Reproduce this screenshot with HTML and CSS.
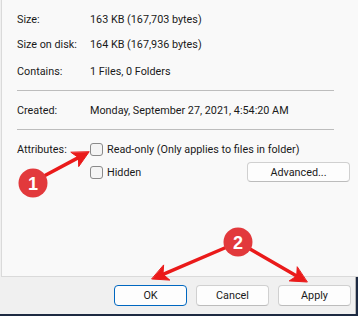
FILE: index.html
```html
<!DOCTYPE html>
<html>
  <head>
    <title>Properties</title>
    <link rel="stylesheet" href="styles.css">
  </head>
  <body>
    <div class="window">
      <div class="panel">
        <div class="row first"><span class="label">Size:</span><span>163 KB (167,703 bytes)</span></div>
        <div class="row disk"><span class="label">Size on disk:</span><span>164 KB (167,936 bytes)</span></div>
        <div class="row"><span class="label">Contains:</span><span>1 Files, 0 Folders</span></div>
        <div class="sep"></div>
        <div class="row"><span class="label">Created:</span><span>Monday, September 27, 2021, 4:54:20 AM</span></div>
        <div class="sep"></div>
        <div class="row"><span class="label">Attributes:</span><span class="check"></span><span>Read-only (Only applies to files in folder)</span></div>
        <div class="row hidden-row">
          <span class="label"></span><span class="check"></span><span>Hidden</span>
          <button class="btn advanced">Advanced...</button>
        </div>
      </div>
      <div class="footer">
        <button class="btn default">OK</button>
        <button class="btn">Cancel</button>
        <button class="btn">Apply</button>
      </div>
    </div>
    <div class="taskbar"></div>

    <svg class="marks" width="358" height="316" viewBox="0 0 358 316">
      <g fill="#ea1a1a" stroke="#ea1a1a" stroke-width="3.5" stroke-linecap="round" stroke-linejoin="round">
        <line x1="44" y1="176" x2="78.4" y2="157.6" />
        <polygon points="89,152 78.7,166.6 78.4,157.6 71.1,152.4" stroke-width="1" />
        <line x1="227" y1="247" x2="163" y2="274.3" />
        <polygon points="152,279 169.8,280.1 163,274.3 163.6,265.3" stroke-width="1" />
        <line x1="250" y1="249" x2="296.7" y2="276" />
        <polygon points="307,282 289.2,280.9 296.7,276 297.2,267.1" stroke-width="1" />
      </g>
      <circle cx="33" cy="183" r="14.5" fill="#e2393c" />
      <circle cx="238" cy="242" r="14.5" fill="#e2393c" />
      <text x="33" y="189.5" class="num">1</text>
      <text x="238" y="248.5" class="num">2</text>
    </svg>
  </body>
</html>
```

FILE: styles.css
```css
body {
  margin: 0;
  width: 358px;
  height: 316px;
  background-color: #1d2a42;
  font-family: Roboto, "Liberation Sans", sans-serif;
  font-size: 10.8px;
  color: #1a1a1a;
  position: relative;
  overflow: hidden;
}

.window {
  height: 314px;
  width: 355px;
  background-color: #f0f0f0;
  border-right: 1px solid #b4b4b4;
  display: flex;
  flex-direction: column;
}

.panel {
  margin-left: 1px;
  width: 345px;
  height: 276px;
  background-color: #f9f9f9;
  border: 1px solid #dadada;
  border-top: none;
  display: flex;
  flex-direction: column;
  padding-left: 15px;
  box-sizing: content-box;
}

.row {
  display: flex;
  align-items: center;
  height: 16px;
  margin-top: 11px;
  white-space: nowrap;
}

.row.disk {
  margin-top: 9px;
}

.label {
  width: 73px;
  flex: none;
}

.sep {
  height: 1px;
  width: 317px;
  margin-top: 11px;
  background-color: #bdbdbd;
}

.check {
  width: 11px;
  height: 11px;
  border: 1px solid #8a8a8a;
  border-radius: 3px;
  background-color: #f4f4f4;
  margin-right: 4px;
  flex: none;
}

.hidden-row {
  margin-top: 7px;
}

.btn {
  font-family: Roboto, "Liberation Sans", sans-serif;
  font-size: 10.8px;
  color: #1a1a1a;
  background-color: #fdfdfd;
  border: 1px solid #d0d0d0;
  border-bottom-color: #bcbcbc;
  border-radius: 4px;
  height: 21px;
  width: 73px;
  padding: 0;
}

.advanced {
  margin-left: auto;
  margin-right: 12px;
  width: 103px;
  height: 20px;
}

.footer {
  display: flex;
  gap: 9px;
  padding: 8px 0 0 114px;
}

.default {
  border: 1px solid #0067c0;
}

.taskbar {
  height: 2px;
}

.marks {
  position: absolute;
  left: 0;
  top: 0;
}

.num {
  fill: #fff;
  font-family: "Liberation Sans", sans-serif;
  font-weight: bold;
  font-size: 18px;
  text-anchor: middle;
}
```
